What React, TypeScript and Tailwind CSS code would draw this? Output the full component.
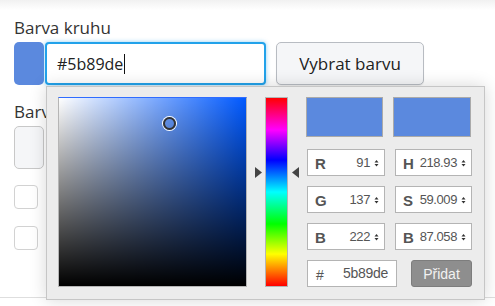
const Spin = () => (
  <svg width="5" height="8" viewBox="0 0 5 8" className="shrink-0">
    <path d="M0.5 3.5 L4.5 3.5 L2.5 1 Z" fill="#333" />
    <path d="M0.5 5 L4.5 5 L2.5 7.5 Z" fill="#333" />
  </svg>
);

function Field({ label, value }: { label: string; value: string }) {
  return (
    <div className="flex h-[27px] items-center border border-[#b4b4b4] bg-white pl-[7px] pr-[5px] font-['Liberation_Sans',Arial,sans-serif] text-[13px] text-[#555]">
      <span className="mt-[3px] text-[15px] font-bold">{label}</span>
      <span className="ml-auto mr-[4px] tracking-[-0.4px]">{value}</span>
      <Spin />
    </div>
  );
}

export default function App() {
  return (
    <div className="relative h-[306px] w-[495px] overflow-hidden bg-white font-['Open_Sans',sans-serif] text-[#333]">
      <div className="h-[10px] bg-[linear-gradient(to_bottom,#f1f1f1,#ffffff)]" />
      <div className="px-[14px] pt-[6px]">
        <div className="text-[17px] leading-[24px]">Barva kruhu</div>
        <div className="mt-[2px] flex h-[43px]">
          <div className="w-[30px] rounded-[5px] bg-[#5b89de]" />
          <div className="ml-[1px] flex w-[221px] items-center rounded-[4px] border-2 border-[#22a2ea] bg-white px-[10px] text-[16px] text-[#222] shadow-[0_0_4px_rgba(34,162,234,0.5)]">
            #5b89de
            <span className="ml-[1px] h-[20px] w-[1px] bg-[#111]" />
          </div>
          <div className="ml-[10px] flex w-[148px] items-center justify-center rounded-[5px] border border-[#b8bcc2] bg-[#f5f6f8] text-[17px] text-[#222] shadow-[0_1px_1px_rgba(0,0,0,0.08)]">
            Vybrat barvu
          </div>
        </div>
        <div className="mt-[15px] text-[17px] leading-[24px]">Barva okraje</div>
        <div className="mt-[2px] h-[43px] w-[30px] rounded-[5px] border border-[#c8c8c8] bg-[#f5f6f8]" />
        <div className="mt-[16px] h-[24px] w-[24px] rounded-[4px] border border-[#d2d2d2] bg-white" />
        <div className="mt-[17px] h-[24px] w-[24px] rounded-[4px] border border-[#d2d2d2] bg-white" />
      </div>
      <div className="mt-[47px] border-t border-[#dedede]" />

      {/* color picker popup */}
      <div className="absolute left-[46px] top-[86px] flex h-[214px] w-[439px] border border-[#c6c6c6] bg-[#ececec] pl-[11px] pt-[10px] shadow-[0_0_16px_rgba(0,0,0,0.16)]">
        <div className="relative h-[190px] w-[189px] border border-[#b5b5b5] border-t-[#2f6cff] bg-[#0059ff]">
          <div className="absolute inset-0 bg-[linear-gradient(to_right,#ffffff,rgba(255,255,255,0))]" />
          <div className="absolute inset-0 bg-[linear-gradient(to_top,#000000,rgba(0,0,0,0))]" />
          <div className="absolute left-[104px] top-[19px] h-[13px] w-[13px] rounded-full border-2 border-[#333] shadow-[0_0_0_1px_#ffffff]" />
        </div>
        <div className="relative ml-[18px] h-[190px] w-[23px] border border-[#b5b5b5] bg-[linear-gradient(to_bottom,#ff0000,#ff00ff_17%,#0000ff_33%,#00ffff_50%,#00ff00_67%,#ffff00_83%,#ff0000)]">
          <svg width="8" height="11" viewBox="0 0 8 11" className="absolute left-[-11px] top-[69px]">
            <path d="M0 0 L7 5.5 L0 11 Z" fill="#444" />
          </svg>
          <svg width="8" height="11" viewBox="0 0 8 11" className="absolute right-[-12px] top-[69px]">
            <path d="M8 0 L1 5.5 L8 11 Z" fill="#444" />
          </svg>
        </div>
        <div className="ml-[18px] w-[166px]">
          <div className="flex h-[40px] gap-[10px]">
            <div className="w-[77px] border border-[#aaa] bg-[#5b89de]" />
            <div className="w-[78px] border border-[#aaa] bg-[#5b89de]" />
          </div>
          <div className="ml-[1px] mt-[12px] grid grid-cols-[78px_77px] gap-x-[10px] gap-y-[10px]">
            <Field label="R" value="91" />
            <Field label="H" value="218.93" />
            <Field label="G" value="137" />
            <Field label="S" value="59.009" />
            <Field label="B" value="222" />
            <Field label="B" value="87.058" />
          </div>
          <div className="ml-[1px] mt-[10px] flex h-[27px] gap-[14px] font-['Liberation_Sans',Arial,sans-serif] text-[14px]">
            <div className="flex w-[90px] items-center border border-[#b4b4b4] bg-white pl-[8px] pr-[8px] text-[#555]">
              <span className="mt-[3px]">#</span>
              <span className="ml-auto tracking-[-0.3px]">5b89de</span>
            </div>
            <div className="flex w-[61px] items-start justify-center rounded-[3px] border border-[#7d7d7d] bg-[#8e8e8e] pt-[3px] text-[#f2f2f2]">
              Přidat
            </div>
          </div>
        </div>
      </div>
    </div>
  );
}
